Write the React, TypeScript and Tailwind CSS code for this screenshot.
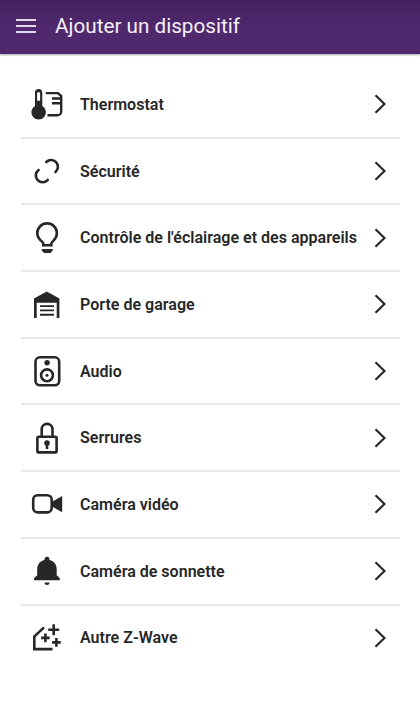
import type { ReactNode } from 'react'

interface Device {
  label: string
  icon: ReactNode
}

const devices: Device[] = [
  {
    label: 'Thermostat',
    icon: (
      <>
        <path
          d="M9 22V8.600a3.650 3.650 0 0 1 7.300 0V22a7.300 7.300 0 1 1-7.300 0ZM12.600 8a1.500 1.500 0 0 0-1.500 1.500v7.200h3V9.500a1.500 1.500 0 0 0-1.500-1.500Z"
          fill="currentColor"
          fillRule="evenodd"
          stroke="none"
        />
        <path d="M19.700 9.100H32L35.200 12V27.500C35.200 29.500 33.300 31.300 31.300 31.300H21.500M26 14.500H35M26 19.300H35" strokeWidth="2.400" />
      </>
    ),
  },
  {
    label: 'Sécurité',
    icon: (
      <g strokeLinecap="round">
        <path d="M20.300 11A6.800 6.800 0 1 1 29.500 21" />
        <path d="M12.600 19A6.800 6.800 0 1 0 21.800 28.900" />
      </g>
    ),
  },
  {
    label: "Contrôle de l'éclairage et des appareils",
    icon: (
      <>
        <path d="M17.300 27.300V25.500C17.300 23.800 11.300 21.500 11.300 15.200a9.800 9.800 0 0 1 19.600 0C30.900 21.500 25.300 23.800 25.300 25.500V27.300Z" />
        <path d="M15.800 31h10.900v1.500l-2.200 2.500h-6.500l-2.200-2.500Z" fill="currentColor" stroke="none" />
      </>
    ),
  },
  {
    label: 'Porte de garage',
    icon: (
      <>
        <path
          d="M8 14.600 20.700 7.500 33.400 14.600V34H30.700V18.700H10.700V34H8Z"
          fill="currentColor"
          stroke="none"
        />
        <path d="M14 22.100H28M14 26.400H28M14 30.700H28" strokeWidth="1.900" />
      </>
    ),
  },
  {
    label: 'Audio',
    icon: (
      <>
        <rect x="9.500" y="6.300" width="23.700" height="28" rx="4.500" />
        <circle cx="21.100" cy="11.700" r="2.700" fill="currentColor" stroke="none" />
        <circle cx="21" cy="24.300" r="5.900" />
        <circle cx="21" cy="24.300" r="1.500" fill="currentColor" stroke="none" />
      </>
    ),
  },
  {
    label: 'Serrures',
    icon: (
      <>
        <rect x="11.400" y="18.700" width="19.200" height="15.700" rx="1.500" />
        <path d="M15.700 18.500V11.300a5.400 5.400 0 0 1 10.800 0V18.500" />
        <circle cx="21" cy="25.100" r="2.800" fill="currentColor" stroke="none" />
        <path d="M21 25.500V31" />
      </>
    ),
  },
  {
    label: 'Caméra vidéo',
    icon: (
      <>
        <rect x="7.200" y="11.200" width="18.500" height="17.200" rx="4.500" />
        <path d="M26.500 17.500 36.200 12V28.300L26.500 22.800Z" fill="currentColor" stroke="none" />
      </>
    ),
  },
  {
    label: 'Caméra de sonnette',
    icon: (
      <g fill="currentColor" stroke="none">
        <path d="M18.500 9V8.300a2.500 2.500 0 0 1 5 0V9C28.300 10.100 30.700 13.800 30.700 18.300V24.300L33.800 27.200V29.300H8V27.200L11.200 24.300V18.300C11.200 13.800 13.800 10.100 18.500 9Z" />
        <path d="M18.300 31.500H23.700C23.300 33.200 22.400 34 21 34S18.700 33.200 18.300 31.500Z" />
      </g>
    ),
  },
  {
    label: 'Autre Z-Wave',
    icon: (
      <>
        <path d="M18 9.400 8.300 18.600V31.100H26.500" />
        <path d="M27.700 6.300V17.300M22.200 11.800H33.200M19.400 15.600V24.200M15.100 19.900H23.700M30.400 20.100V28.700M26.100 24.400H34.700" />
      </>
    ),
  },
]

function MenuButton() {
  return (
    <button className="ml-4 flex w-5 flex-col gap-1" aria-label="Menu">
      <span className="h-0.5 bg-[#e3d9ea]" />
      <span className="h-0.5 bg-[#e3d9ea]" />
      <span className="h-0.5 bg-[#e3d9ea]" />
    </button>
  )
}

function DeviceRow({ label, icon }: Device) {
  return (
    <li className="flex h-[66.7px] items-center border-b-2 border-[#e9e9e9] last:border-transparent">
      <svg
        viewBox="0 0 40 40"
        className="ml-[5px] size-10 shrink-0"
        fill="none"
        stroke="currentColor"
        strokeWidth="2.600"
      >
        {icon}
      </svg>
      <span className="ml-3.5 flex-1 whitespace-nowrap pt-px text-[16.05px] font-semibold">{label}</span>
      <svg viewBox="0 0 12 20" className="mr-3.5 h-5 w-3 shrink-0" fill="none" stroke="currentColor" strokeWidth="2.200">
        <path d="M1.500 1.300 10.500 10 1.500 18.700" />
      </svg>
    </li>
  )
}

export default function App() {
  return (
    <div className="h-[712px] w-full overflow-hidden bg-white font-['Roboto',sans-serif] text-[#272727]">
      <header className="flex h-[54px] items-center bg-linear-to-b from-[#432160] to-[#4f286d] to-50% pb-0.5 shadow-[0_1px_2px_rgba(0,0,0,0.35)]">
        <MenuButton />
        <h1 className="ml-[19px] pt-0.5 text-[20.7px] text-[#f5f0f8]">Ajouter un dispositif</h1>
      </header>
      <ul className="ml-[21px] mr-5 mt-[18px]">
        {devices.map((device) => (
          <DeviceRow key={device.label} {...device} />
        ))}
      </ul>
    </div>
  )
}
